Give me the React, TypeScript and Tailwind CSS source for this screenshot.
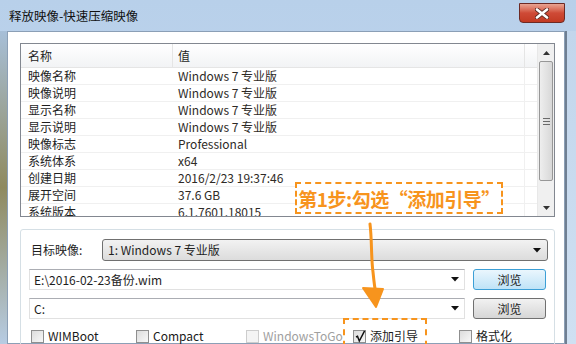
import React from 'react'

const rows: [string, string][] = [
  ['映像名称', 'Windows 7 专业版'],
  ['映像说明', 'Windows 7 专业版'],
  ['显示名称', 'Windows 7 专业版'],
  ['显示说明', 'Windows 7 专业版'],
  ['映像标志', 'Professional'],
  ['系统体系', 'x64'],
  ['创建日期', '2016/2/23 19:37:46'],
  ['展开空间', '37.6 GB'],
  ['系统版本', '6.1.7601.18015'],
]

const font = { fontFamily: '"Noto Sans CJK SC", "Noto Sans", sans-serif' }

function DropArrow() {
  return (
    <svg width="8" height="5" viewBox="0 0 8 5" className="shrink-0">
      <path d="M0 0 H8 L4 4.5 Z" fill="#111" />
    </svg>
  )
}

function Checkbox({ label, checked, disabled }: { label: string; checked?: boolean; disabled?: boolean }) {
  return (
    <div className="flex items-center gap-[4px]">
      <div
        className={`relative w-[13px] h-[13px] border ${
          disabled ? 'border-[#cdcdcd] bg-[#f4f4f4]' : 'border-[#8f8f8f] bg-gradient-to-br from-[#dcdcdc] to-[#f8f8f8]'
        }`}
      >
        {checked && (
          <svg className="absolute left-[1px] -top-[1px]" width="11" height="13" viewBox="0 0 11 13">
            <path d="M1 7 L2.5 6.3 L4.3 11 L9.6 0.8" stroke="#111" strokeWidth="1.5" fill="none" strokeLinejoin="miter" />
          </svg>
        )}
      </div>
      <span className={`text-[12px] leading-[16px] ${disabled ? 'text-[#a0a0a0]' : 'text-[#1a1a1a]'}`}>{label}</span>
    </div>
  )
}

function BrowseButton({ focused }: { focused?: boolean }) {
  return (
    <div
      className={`w-[73px] h-[21px] rounded-[3px] border flex items-center justify-center text-[12px] text-[#222] ${
        focused
          ? 'border-[#3c9fd6] bg-gradient-to-b from-[#eaf6fd] to-[#bfe3f7]'
          : 'border-[#707070] bg-gradient-to-b from-[#f2f2f2] to-[#d6d6d6]'
      }`}
    >
      浏览
    </div>
  )
}

export default function App() {
  return (
    <div className="relative w-[576px] h-[344px] overflow-hidden bg-gradient-to-b from-[#b8d0ea] to-[#c6daf0]" style={font}>
      {/* title bar */}
      <div className="h-[31px] flex items-start">
        <div className="pl-[9px] pt-[7px] text-[12.5px] text-[#111]">释放映像-快速压缩映像</div>
        <div className="ml-auto mr-[11px] mt-[3px] w-[46px] h-[20px] rounded-b-[4px] border border-[#6d2a24] bg-gradient-to-b from-[#e8a493] via-[#cf4a36] to-[#c23a22] flex items-center justify-center">
          <svg width="14" height="11" viewBox="0 0 14 11">
            <path d="M2 1.5 L12 9.5 M12 1.5 L2 9.5" stroke="#5a2a22" strokeWidth="4.2" strokeLinecap="round" />
            <path d="M2 1.5 L12 9.5 M12 1.5 L2 9.5" stroke="#ffffff" strokeWidth="2.6" strokeLinecap="round" />
          </svg>
        </div>
      </div>

      <div className="flex h-[313px]">
        <div className="w-[7px] bg-gradient-to-b from-[#a7bfd8] via-[#8f8a5e] to-[#b7cce3]" />
        <div className="w-[558px] bg-white border border-[#8b9fb6] pt-[11px] px-[12px]">
          {/* list view */}
          <div className="w-[535px] h-[174px] border border-[#828790] flex overflow-hidden">
            <div className="flex-1 flex flex-col">
              <div className="h-[24px] shrink-0 flex bg-gradient-to-b from-white to-[#f2f3f5] border-b border-[#e5e5e5] text-[12px] text-[#1e1e1e]">
                <div className="w-[152px] pl-[7px] flex items-center border-r border-[#e5e5e5]">名称</div>
                <div className="w-[352px] pl-[5px] flex items-center border-r border-[#e5e5e5]">值</div>
                <div className="flex-1" />
              </div>
              {rows.map(([k, v]) => (
                <div key={k} className="h-[17px] shrink-0 flex border-b border-[#f0f0f0] text-[12px] leading-[16px]">
                  <div className="w-[152px] pl-[7px] text-[#1e1e1e]">{k}</div>
                  <div className="w-[352px] pl-[5px] text-[#2e2a26] border-r border-[#f0f0f0]">{v}</div>
                </div>
              ))}
            </div>
            {/* scrollbar */}
            <div className="w-[17px] bg-[#f0f0f0] border-l border-[#e8e8e8] flex flex-col">
              <div className="h-[17px] shrink-0 flex items-center justify-center">
                <svg width="7" height="4" viewBox="0 0 7 4"><path d="M0 4 L3.5 0 L7 4 Z" fill="#333" /></svg>
              </div>
              <div className="mx-[1px] h-[120px] shrink-0 rounded-[2px] border border-[#979797] bg-gradient-to-r from-[#eeeeee] to-[#d8d8d8] flex items-center justify-center">
                <div className="flex flex-col gap-[2px]">
                  <div className="w-[7px] h-px bg-[#6a6a6a]" />
                  <div className="w-[7px] h-px bg-[#6a6a6a]" />
                  <div className="w-[7px] h-px bg-[#6a6a6a]" />
                </div>
              </div>
              <div className="flex-1" />
              <div className="h-[17px] shrink-0 flex items-center justify-center">
                <svg width="7" height="4" viewBox="0 0 7 4"><path d="M0 0 L7 0 L3.5 4 Z" fill="#333" /></svg>
              </div>
            </div>
          </div>

          {/* group box */}
          <div className="mt-[12px] w-[535px] h-[130px] rounded-[3px] border border-[#d5dfe5] pt-[9px] pl-[8px] pr-[6px]">
            <div className="flex items-center h-[22px]">
              <div className="w-[73px] pl-[2px] text-[12px] text-[#1e1e1e]">目标映像:</div>
              <div className="flex-1 h-[22px] rounded-[3px] border border-[#707070] bg-gradient-to-b from-[#f2f2f2] to-[#dcdcdc] flex items-center px-[5px] text-[12px] text-[#1e1e1e]">
                <span>1: Windows 7 专业版</span>
                <span className="ml-auto mr-[1px]"><DropArrow /></span>
              </div>
            </div>
            <div className="mt-[8px] flex items-center gap-[8px]">
              <div className="w-[436px] h-[21px] border border-[#e1e1e1] border-t-[#abadb3] bg-white flex items-center px-[4px] text-[12px] text-[#1e1e1e]">
                <span>E:\2016-02-23备份.wim</span>
                <span className="ml-auto mr-[1px]"><DropArrow /></span>
              </div>
              <BrowseButton focused />
            </div>
            <div className="mt-[8px] flex items-center gap-[8px]">
              <div className="w-[436px] h-[21px] border border-[#e1e1e1] border-t-[#abadb3] bg-white flex items-center px-[4px] text-[12px] text-[#1e1e1e]">
                <span>C:</span>
                <span className="ml-auto mr-[1px]"><DropArrow /></span>
              </div>
              <BrowseButton />
            </div>
            <div className="mt-[9px] flex items-center pl-[2px]">
              <div className="w-[105px]"><Checkbox label="WIMBoot" /></div>
              <div className="w-[110px]"><Checkbox label="Compact" /></div>
              <div className="w-[107px]"><Checkbox label="WindowsToGo" disabled /></div>
              <div className="w-[106px]"><Checkbox label="添加引导" checked /></div>
              <Checkbox label="格式化" />
            </div>
          </div>
        </div>
        <div className="flex-1 bg-gradient-to-b from-[#c2d6ec] to-[#cfe0f2] border-l-[2px] border-[#6f7f92]" />
      </div>

      {/* annotation: step label */}
      <div className="absolute left-[295px] top-[182px] w-[208px] h-[32px] bg-white border-2 border-dashed border-[#f7941d] flex items-center justify-center">
        <span className="text-[19px] font-bold text-[#f7941d] leading-none tracking-[-0.5px]">第1步:勾选“添加引导”</span>
      </div>
      {/* annotation: highlight around checkbox */}
      <div className="absolute left-[343px] top-[318px] w-[84px] h-[40px] border-2 border-dashed border-[#f7941d]" />
      {/* annotation: arrow */}
      <svg className="absolute left-0 top-0" width="576" height="344" viewBox="0 0 576 344">
        <path d="M370 224 C372 240 371 258 373 272 C374 282 375 290 376 294" stroke="#f7941d" strokeWidth="3" fill="none" strokeLinecap="round" />
        <path d="M363 288 L383 289 L376 307 Z" fill="#f7941d" stroke="#f7941d" strokeWidth="2" strokeLinejoin="round" />
      </svg>
    </div>
  )
}
